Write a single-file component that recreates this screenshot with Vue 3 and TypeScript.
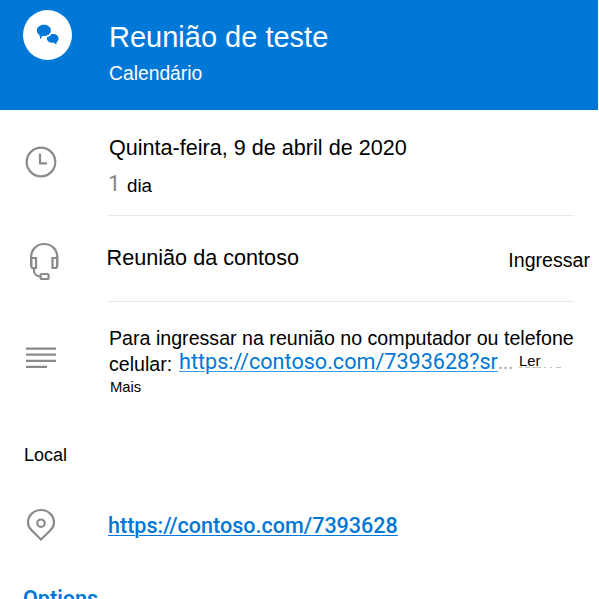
<script setup lang="ts">
const meetingUrl = 'https://contoso.com/7393628'
const event = {
  title: 'Reunião de teste',
  source: 'Calendário',
  date: 'Quinta-feira, 9 de abril de 2020',
  meeting: 'Reunião da contoso',
}
</script>

<template>
  <main class="screen">
    <header class="header">
      <div class="avatar">
        <svg width="49" height="50" viewBox="0 0 49 50">
          <ellipse cx="24.500" cy="25" rx="24.500" ry="25" fill="#fff" />
          <path d="M21 14.800c4 0 6.900 2.500 6.900 5.600s-2.900 5.500-6.900 5.500c-.7 0-1.300-.1-1.900-.2-.3 1.500-1 2.700-2.200 3.500.3-1.500.1-3-.6-4.400-1.600-1-2.400-2.600-2.400-4.400 0-3.100 3-5.600 7.100-5.600z" fill="#0078d7" />
          <path d="M30 23.900c3.300 0 5.600 1.900 5.600 4.500 0 1.500-.7 2.800-1.900 3.600-.4 1-.4 1.700 0 2.600-1.200-.4-1.900-1-2.300-1.900-4.300.5-7.500-1.500-7.500-4.300 0-.5.100-.9.300-1.300 1.900-.3 3.300-1.300 4.100-3 .5-.1 1.100-.2 1.700-.2z" fill="#0078d7" />
        </svg>
      </div>
      <div class="heading">
        <h1><span>{{ event.title }}</span></h1>
        <p><span>{{ event.source }}</span></p>
      </div>
    </header>

    <section class="row when">
      <svg class="icon" width="32" height="32" viewBox="0 0 32 32">
        <circle cx="16" cy="16" r="14.300" />
        <path d="M15 7.500V17.400H22" />
      </svg>
      <div class="body">
        <p class="date"><span>{{ event.date }}</span></p>
        <p class="duration"><span class="count">1</span><span class="unit">dia</span></p>
      </div>
    </section>

    <section class="row meeting">
      <svg class="icon" width="32" height="40" viewBox="0 0 32 40">
        <path d="M3.200 24V14.500C3.200 7.500 9 2 16.200 2s13 5.500 13 12.500V24" />
        <path d="M3.200 16H8v10H5.500a2.300 2.300 0 0 1-2.300-2.300zM29.200 16h-4.700v10H27a2.300 2.300 0 0 0 2.200-2.300z" />
        <path d="M6 26v2.500c0 3.500 2.500 6 6.500 6" />
        <rect x="12.600" y="32" width="8" height="5" rx="1.500" />
      </svg>
      <div class="body">
        <p class="name"><span>{{ event.meeting }}</span></p>
        <button class="join" type="button"><span>Ingressar</span></button>
      </div>
    </section>

    <section class="row notes">
      <svg class="icon" width="32" height="24" viewBox="0 0 32 24">
        <path d="M1 2.600h30M1 8.700h30M1 14.800h30M1 20.900h21" />
      </svg>
      <div class="body">
        <p class="line"><span class="intro">Para ingressar na reunião no computador ou telefone</span></p>
        <p class="line second">
          <span class="device">celular:</span>
          <a class="long-link">{{ meetingUrl }}?sr</a><span class="dots">...</span>
          <span class="read">Ler<svg class="dashes" width="46" height="2" viewBox="0 0 46 2"><path d="M0 .5h3M6 .5h5M13 .5h9M25 .5h2M31 .5h2M37 .5h5" /></svg></span>
        </p>
        <p class="more"><span>Mais</span></p>
      </div>
    </section>

    <h2 class="local"><span>Local</span></h2>

    <section class="row place">
      <svg class="icon" width="32" height="34" viewBox="0 0 32 34">
        <path d="M16 31.500 6.600 22.200C4 19.600 3 17 3 14.400 3 7.500 8.800 2 16 2s13 5.500 13 12.400c0 2.600-1 5.200-3.600 7.800z" />
        <circle cx="16" cy="15.200" r="3.700" />
      </svg>
      <div class="body"><a class="place-link">{{ meetingUrl }}</a></div>
    </section>

    <h2 class="options"><span>Options</span></h2>
  </main>
</template>

<style>
body {
  margin: 0;
  background: #fff;
}
</style>

<style scoped>
.screen {
  box-sizing: border-box;
  width: 599px;
  height: 599px;
  overflow: hidden;
  background: #fff;
  color: #000;
  font-family: "Liberation Sans", Arial, sans-serif;
}
h1, h2, p {
  margin: 0;
  font-weight: 400;
  white-space: nowrap;
}
.header {
  display: flex;
  width: 598px;
  height: 110px;
  background: #0078d7;
  color: #fff;
}
.avatar {
  width: 109px;
  box-sizing: border-box;
  padding: 10px 0 0 23px;
}
.heading { padding-top: 17px; }
h1 {
  font-size: 29px;
  line-height: 40px;
}
.heading p {
  font-size: 19.300px;
  line-height: 34px;
}
.row {
  display: grid;
  grid-template-columns: 108px 1fr;
}
.icon {
  margin-left: 25px;
  fill: none;
  stroke: #8a8a8a;
  stroke-width: 2.200;
}
.when { height: 106px; }
.when .icon { margin-top: 36px; }
.when .body, .meeting .body {
  width: 466px;
  box-sizing: border-box;
  border-bottom: 1px solid #e9e9e9;
}
.date {
  padding: 24px 0 0 1px;
  font-size: 21.600px;
  line-height: 28px;
}
.duration {
  display: flex;
  align-items: baseline;
  margin-top: 7px;
  line-height: 30px;
}
.count {
  width: 19px;
  color: #85858b;
  font-family: Roboto, sans-serif;
  font-size: 22px;
}
.unit { font-size: 18.800px; position: relative; top: 1px; }
.meeting { height: 86px; }
.meeting .icon { margin: 26px 0 0 28px; }
.meeting .body {
  display: flex;
  justify-content: space-between;
}
.name {
  padding-top: 28px;
  margin-left: -1.500px;
  font-size: 21.650px;
  line-height: 28px;
}
.join {
  margin: 31px -16px 0 0;
  padding: 0;
  border: 0;
  height: 26px;
  background: none;
  color: #000;
  font: 19.600px/26px "Liberation Sans", Arial, sans-serif;
}
.notes { height: 138px; }
.notes .icon { margin-top: 44px; }
.notes .body { padding: 24px 0 0 1px; }
.line {
  height: 25px;
  font-size: 19.640px;
  line-height: 25px;
}
.second {
  display: flex;
  align-items: flex-start;
}
.device { width: 70px; padding-top: 1px; }
.long-link {
  margin-top: -2px;
  color: #0078d7;
  font-family: Roboto, sans-serif;
  font-size: 21.600px;
  text-decoration: underline;
  text-decoration-color: #3d9be3;
  text-decoration-thickness: 1px;
  text-underline-offset: 2px;
}
.dots {
  width: 21px;
  margin-top: -1px;
  color: #aaa;
  font-family: Roboto, sans-serif;
}
.read {
  position: relative;
  margin-top: -2px;
  font-size: 14.800px;
}
.dashes {
  position: absolute;
  left: 0;
  top: 18px;
  stroke: #c4c4c4;
  stroke-width: 1;
}
.more {
  padding-left: 1px;
  font-size: 14.800px;
  line-height: 22px;
}
.local {
  height: 30px;
  padding-left: 24px;
  font-size: 18px;
  line-height: 30px;
}
.place { height: 114px; }
.place .icon { margin-top: 38px; }
.place .body { padding-top: 42px; }
.place-link {
  color: #0078d7;
  font-family: Roboto, sans-serif;
  font-size: 21.550px;
  line-height: 28px;
  font-weight: 500;
  text-decoration: underline;
  text-decoration-thickness: 1px;
  text-underline-offset: 2px;
}
.options {
  padding-left: 23px;
  color: #0078d7;
  font-family: Roboto, sans-serif;
  font-size: 21.500px;
  line-height: 30px;
  font-weight: 600;
}
</style>
